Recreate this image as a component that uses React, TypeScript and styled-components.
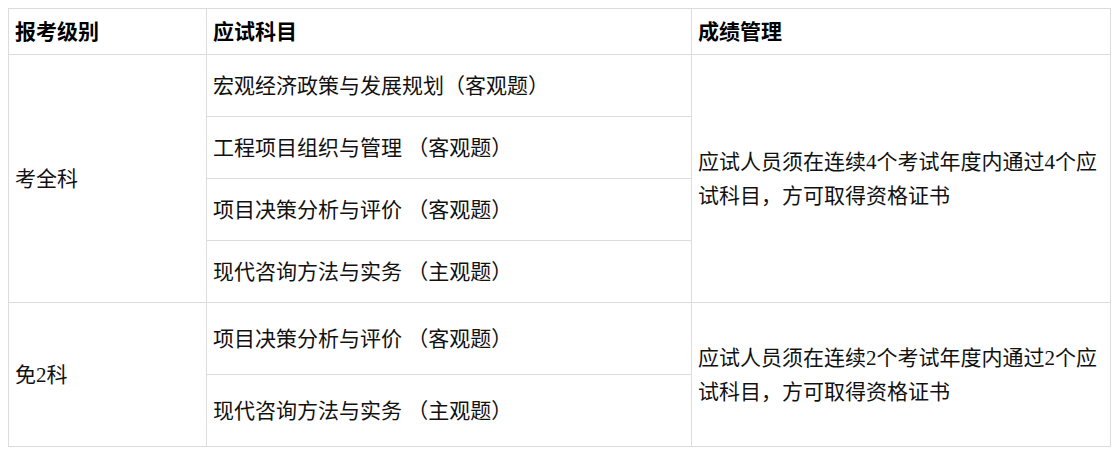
import React from 'react';
import styled, {createGlobalStyle} from 'styled-components';

const GlobalStyle = createGlobalStyle`
  body {
    margin: 8px;
    background: #fff;
    font-family: "Liberation Serif", "Noto Sans CJK SC", serif;
  }
`

type Group = {
    level: string
    subjects: string[]
    rule: string
    rowHeight: number
}

const groups: Group[] = [
    {
        level: '考全科',
        subjects: [
            '宏观经济政策与发展规划（客观题）',
            '工程项目组织与管理 （客观题）',
            '项目决策分析与评价 （客观题）',
            '现代咨询方法与实务 （主观题）',
        ],
        rule: '应试人员须在连续4个考试年度内通过4个应试科目，方可取得资格证书',
        rowHeight: 62,
    },
    {
        level: '免2科',
        subjects: [
            '项目决策分析与评价 （客观题）',
            '现代咨询方法与实务 （主观题）',
        ],
        rule: '应试人员须在连续2个考试年度内通过2个应试科目，方可取得资格证书',
        rowHeight: 72,
    },
]

export default function App() {
    return (
        <>
            <GlobalStyle/>
            <Table>
                <colgroup>
                    <col style={{width: 198}}/>
                    <col style={{width: 485}}/>
                    <col/>
                </colgroup>
                <thead>
                <tr>
                    <HeadCell>报考级别</HeadCell>
                    <HeadCell>应试科目</HeadCell>
                    <HeadCell>成绩管理</HeadCell>
                </tr>
                </thead>
                <tbody>
                {groups.map((g) =>
                    g.subjects.map((s, i) => (
                        <tr key={g.level + i}>
                            {i === 0 && <Cell rowSpan={g.subjects.length}>{g.level}</Cell>}
                            <Cell $h={g.rowHeight}>{s}</Cell>
                            {i === 0 && <Cell rowSpan={g.subjects.length}>{g.rule}</Cell>}
                        </tr>
                    ))
                )}
                </tbody>
            </Table>
        </>
    );
}

const Table = styled.table`
  width: 100%;
  table-layout: fixed;
  border-collapse: collapse;
  font-size: 21px;
  line-height: 34px;
  color: #111;
`

const HeadCell = styled.th`
  height: 45px;
  padding: 0 6px;
  border: 1px solid #dcdcdc;
  text-align: left;
  font-weight: 700;
  color: #000;
`

const Cell = styled.td<{ $h?: number }>`
  height: ${p => p.$h ? `${p.$h - 1}px` : 'auto'};
  padding: 0 6px;
  border: 1px solid #dcdcdc;
  vertical-align: middle;
`
